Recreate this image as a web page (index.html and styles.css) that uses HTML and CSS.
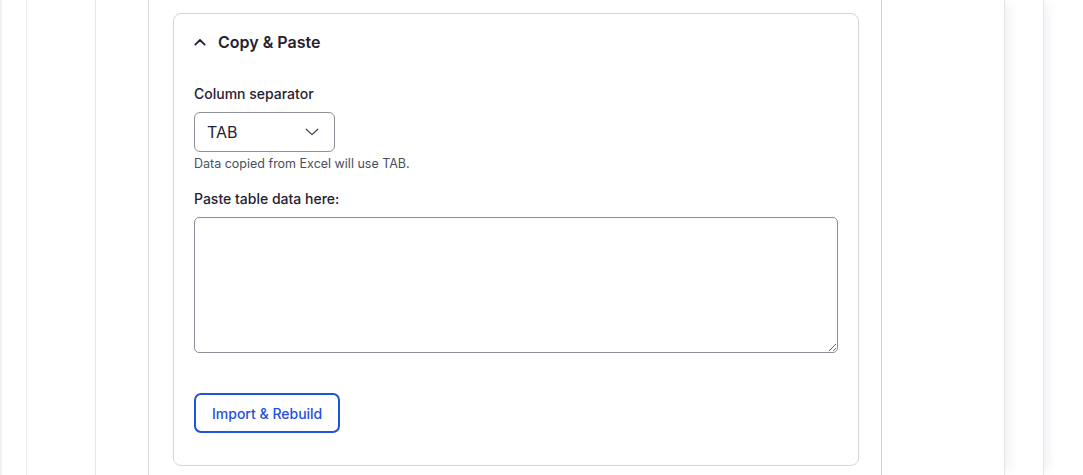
FILE: index.html
```html
<!DOCTYPE html>
<html lang="en">
<head>
<meta charset="utf-8">
<title>Copy &amp; Paste</title>
<link rel="stylesheet" href="styles.css">
</head>
<body>
<div class="page">
  <div class="edge"></div>
  <div class="shell">
    <div class="main">
      <div class="content">
        <section class="panel">
          <div class="panel-header">
            <svg class="chev-up" width="12" height="8" viewBox="0 0 12 8" aria-hidden="true"><path d="M1.3 6.6 6 2 10.7 6.6" fill="none" stroke="#1f2233" stroke-width="1.8" stroke-linecap="round" stroke-linejoin="round"/></svg>
            <h2 class="panel-title">Copy &amp; Paste</h2>
          </div>
          <div class="panel-body">
            <div class="field">
              <label class="label">Column separator</label>
              <button class="select" type="button">
                <span>TAB</span>
                <svg width="14" height="8" viewBox="0 0 14 8" aria-hidden="true"><path d="M1.2 1.2 7 6.6 12.8 1.2" fill="none" stroke="#3a3e4a" stroke-width="1.2" stroke-linecap="round" stroke-linejoin="round"/></svg>
              </button>
              <p class="help">Data copied from Excel will use TAB.</p>
            </div>
            <div class="field field-paste">
              <label class="label">Paste table data here:</label>
              <textarea class="paste"></textarea>
            </div>
            <div class="actions">
              <button class="btn-outline" type="button">Import &amp; Rebuild</button>
            </div>
          </div>
        </section>
      </div>
    </div>
  </div>
</div>
</body>
</html>
```

FILE: styles.css
```css
* { box-sizing: border-box; }

html, body {
  margin: 0;
  padding: 0;
  background: #ffffff;
  font-family: Inter, "Noto Sans", "Liberation Sans", sans-serif;
  color: #1f2233;
}

.page {
  display: flex;
  height: 475px;
  overflow: hidden;
}

.edge {
  width: 2px;
  flex: 0 0 2px;
  background: linear-gradient(to right, #ececf3, #f7f7fb);
}

.shell {
  margin-left: 24px;
  width: 1018px;
  flex: 0 0 1018px;
  height: 100%;
  border-left: 1px solid #ececf1;
  border-right: 1px solid #e6e6eb;
  box-shadow: 8px 0 10px -4px rgba(40, 50, 110, 0.07);
  background: #ffffff;
  display: flex;
}

.main {
  margin-left: 68px;
  width: 910px;
  flex: 0 0 910px;
  height: 100%;
  border-left: 1px solid #e6e6e9;
  border-right: 1px solid #e3e3e8;
  box-shadow: 8px 0 10px -4px rgba(40, 50, 110, 0.07);
  background: #ffffff;
  display: flex;
}

.content {
  margin-left: 52px;
  width: 734px;
  flex: 0 0 734px;
  height: 100%;
  border-left: 1px solid #dadada;
  border-right: 1px solid #d6d6d6;
  padding-top: 13px;
}

.panel {
  margin-left: 24px;
  width: 686px;
  border: 1px solid #d6d6d8;
  border-radius: 8px;
  background: #ffffff;
}

.panel-header {
  display: flex;
  align-items: center;
  gap: 12px;
  padding: 16px 20px 0 20px;
}

.chev-up { display: block; flex: 0 0 auto; }

.panel-title {
  margin: 0;
  font-size: 16px;
  line-height: 24px;
  font-weight: 600;
  color: #1f2233;
}

.panel-body {
  padding: 30px 20px 32px 20px;
}

.field {
  display: flex;
  flex-direction: column;
  align-items: flex-start;
}

.field-paste {
  margin-top: 17px;
  align-items: stretch;
}

.label {
  font-size: 14px;
  line-height: 20px;
  font-weight: 500;
  color: #1f2233;
  margin-bottom: 8px;
}

.select {
  display: flex;
  align-items: center;
  justify-content: space-between;
  width: 141px;
  height: 40px;
  padding: 0 15px 0 12px;
  border: 1px solid #8d9099;
  border-radius: 6px;
  background: #ffffff;
  font-family: inherit;
  font-size: 16px;
  color: #1f2233;
  cursor: pointer;
}

.select svg { display: block; }

.help {
  margin: 4px 0 0 0;
  font-size: 12.5px;
  line-height: 16px;
  color: #4a4f5c;
}

.paste {
  display: block;
  width: 644px;
  height: 136px;
  border: 1px solid #8c8f98;
  border-radius: 5px;
  font-family: inherit;
  font-size: 14px;
  padding: 8px 10px;
  resize: vertical;
  background: #ffffff;
}

.actions {
  margin-top: 40px;
  display: flex;
}

.btn-outline {
  height: 40px;
  padding: 0 16px;
  border: 2px solid #2151e0;
  border-radius: 7px;
  background: #ffffff;
  color: #2151e0;
  font-family: inherit;
  font-size: 14px;
  font-weight: 500;
  cursor: pointer;
}
```
